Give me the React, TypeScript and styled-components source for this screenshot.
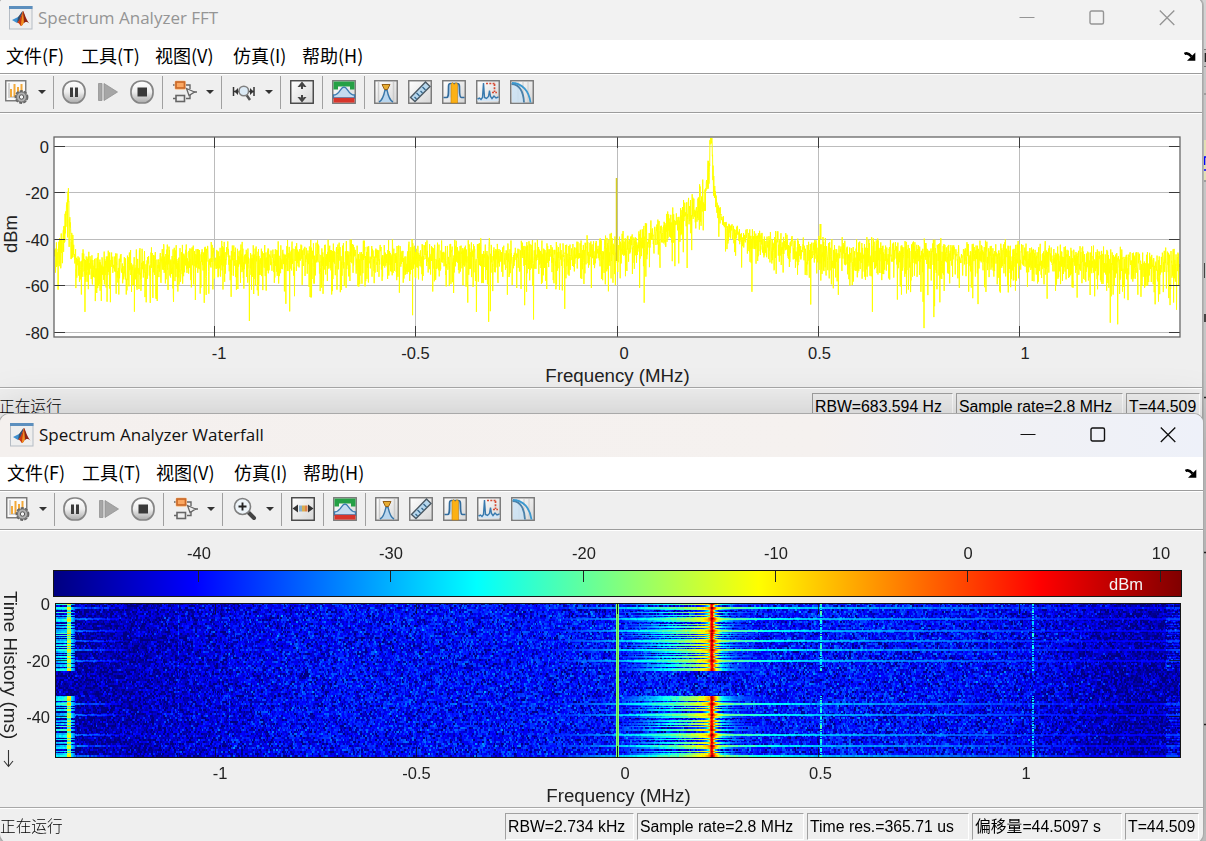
import React, { useLayoutEffect, useRef } from "react";
import styled, { createGlobalStyle } from "styled-components";

const GlobalStyle = createGlobalStyle`
  * { box-sizing: border-box; }
  html, body { margin: 0; padding: 0; }
  body { width: 1206px; height: 841px; overflow: hidden; }
`;

const SANS = `"Liberation Sans", "Noto Sans CJK SC", sans-serif`;
const UI = `"Open Sans", "Noto Sans CJK SC", sans-serif`;

/* ---------- window chrome ---------- */

const Desktop = styled.main`
  position: relative;
  width: 1206px;
  height: 841px;
  overflow: hidden;
  background: #c6c6c6;
`;

const Backdrop = styled.svg`
  position: absolute;
  right: 0;
  top: 0;
`;

const Window = styled.section<{ $x: number; $y: number; $h: number; $active?: boolean }>`
  position: absolute;
  left: ${(p) => p.$x}px;
  top: ${(p) => p.$y}px;
  width: 1203px;
  height: ${(p) => p.$h}px;
  display: flex;
  flex-direction: column;
  overflow: hidden;
  background: #efefef;
  border-radius: 9px;
  box-shadow: 0 0 0 1px #a9a9a9${(p) => (p.$active ? ", 0 0 44px 4px rgba(0,0,0,.17)" : ", 1px 0 0 1px #b4b4b4")};
`;

const TitleBar = styled.header<{ $active?: boolean }>`
  height: 43px;
  flex: none;
  display: flex;
  align-items: center;
  padding: 0 0 1px 10px;
  background: ${(p) =>
    p.$active ? "linear-gradient(90deg,#f4f0ee 0%,#f5f1ef 68%,#f1f1f4 80%,#eef1f9 100%)" : "#f2f2f2"};
  color: ${(p) => (p.$active ? "#111" : "#959595")};
`;

const Title = styled.h1`
  flex: 1;
  margin: 0 0 0 5px;
  font: 400 17px/24px ${UI};
  white-space: nowrap;
`;

const Controls = styled.div`
  display: flex;
  align-items: center;
  gap: 54px;
  padding-right: 27px;
  svg { display: block; }
`;

const MenuBar = styled.nav`
  height: 33px;
  flex: none;
  display: flex;
  align-items: center;
  background: #fff;
  padding: 0 6px 0 7px;
`;

const MenuItem = styled.span<{ $w: number }>`
  width: ${(p) => p.$w}px;
  padding-bottom: 3px;
  font: 400 18px/26px "Noto Sans CJK SC", sans-serif;
  color: #000;
  white-space: nowrap;
`;

const Spacer = styled.span`
  flex: 1;
`;

const ToolBar = styled.div`
  height: 41px;
  flex: none;
  display: flex;
  align-items: center;
  border-top: 1px solid #9c9c9c;
  border-bottom: 1px solid #fff;
  box-shadow: inset 0 1px #fff, inset 0 -1px #9c9c9c;
  padding: 0 0 4px 6px;
`;

const Tool = styled.span<{ $gap?: number }>`
  width: 24px;
  height: 24px;
  margin-left: ${(p) => p.$gap ?? 10}px;
  flex: none;
  svg { display: block; }
`;

const Divider = styled.i<{ $gap?: number }>`
  width: 1px;
  height: 33px;
  margin: 2px 0 0 ${(p) => p.$gap ?? 0}px;
  background: #a0a0a0;
`;

const Caret = styled.i`
  width: 24px;
  display: flex;
  justify-content: center;
  padding-left: 2px;
  &::after {
    content: "";
    border: 4px solid transparent;
    border-top: 4px solid #333;
    border-bottom: 0;
  }
`;

const Body = styled.div<{ $h: number }>`
  height: ${(p) => p.$h}px;
  flex: none;
  display: grid;
  & > * { grid-area: 1 / 1; display: block; }
`;

const StatusBar = styled.footer<{ $end: number }>`
  flex: 1;
  display: flex;
  align-items: flex-start;
  gap: 3px;
  border-top: 1px solid #a8a8a8;
  box-shadow: inset 0 1px #fff;
  padding: 5px ${(p) => p.$end}px 0 0;
`;

const StatusText = styled.span`
  flex: 1;
  font: 300 15.7px/26px "Noto Sans CJK SC", sans-serif;
  color: #000;
`;

const StatusCell = styled.span<{ $w: number }>`
  width: ${(p) => p.$w}px;
  height: 27px;
  border: 1px solid #fff;
  border-top-color: #a0a0a0;
  border-left-color: #a0a0a0;
  padding-left: 2px;
  font: 400 15.8px/26px ${SANS};
  color: #000;
  white-space: nowrap;
  overflow: hidden;
`;

const WaterfallCanvas = styled.canvas`
  margin: 72px 0 0 56px;
  width: 1125px;
  height: 154px;
`;

/* ---------- icons ---------- */

const Box = ({ children, dark }: { children: React.ReactNode; dark?: boolean }) => (
  <svg width="24" height="24" viewBox="0 0 24 24">
    <defs>
      <linearGradient id="face" x1="0" y1="0" x2="1" y2="1">
        <stop offset="0" stopColor="#fff" />
        <stop offset="1" stopColor="#d6d6d6" />
      </linearGradient>
    </defs>
    <rect x=".75" y=".75" width="22.5" height="22.5" fill="url(#face)" stroke={dark ? "#444" : "#777"} strokeWidth="1.4" />
    {children}
  </svg>
);

const MatlabIcon = () => (
  <svg width="24" height="24" viewBox="0 0 24 24">
    <rect x=".5" y=".5" width="22.5" height="22.5" fill="#eee" stroke="#b5bcc4" />
    <rect x="0" y="0" width="23.5" height="3" fill="#5c8fbe" />
    <path d="M3 14 L9 11 L11 13 L8 17Z" fill="#3d8fd0" />
    <path d="M9 11 C11 9 12 6 14 5 L11 14 L8 17Z" fill="#35506e" />
    <path d="M14 5 C12 10 11 14 8 17 C10 16 11 20 12 20 C14 20 14 16 17 15 C16 12 15 6 14 5Z" fill="#ca3a12" />
    <path d="M14 5 C13 12 12 16 12 20 C14 20 14 16 16 15Z" fill="#f09020" />
    <path d="M14 5 C16 8 17 14 21 18 C18 15 16 16 15 17Z" fill="#8d2414" />
  </svg>
);

const SettingsIcon = () => (
  <svg width="24" height="24" viewBox="0 0 24 24">
    <rect x=".75" y=".75" width="20" height="20" fill="#fafafa" stroke="#777" strokeWidth="1.4" />
    <path d="M4 3v15M5 17h10" stroke="#aaa" />
    <path d="M6 9v8M9.500 4v13M13 7v7M16.500 4v8" stroke="#f2a93a" strokeWidth="2" />
    <circle cx="16.500" cy="17" r="6" fill="#aaa" stroke="#666" strokeWidth="1.800" strokeDasharray="3 1.3" />
    <circle cx="16.500" cy="17" r="5" fill="#b0b0b0" stroke="#666" strokeWidth=".8" />
    <circle cx="16.500" cy="17" r="2.200" fill="#f4f4f4" stroke="#555" />
  </svg>
);

const RoundButton = ({ kind }: { kind: "pause" | "stop" }) => (
  <svg width="24" height="24" viewBox="0 0 24 24">
    <defs>
      <linearGradient id="round" x1="0" y1="0" x2="0" y2="1">
        <stop offset="0" stopColor="#fff" />
        <stop offset=".5" stopColor="#eee" />
        <stop offset="1" stopColor="#aaa" />
      </linearGradient>
    </defs>
    <rect x="1" y="1" width="22" height="22" rx="10" fill="url(#round)" stroke="#858585" strokeWidth="1.700" />
    {kind === "pause" ? (
      <path d="M8 7.500h3v9.500h-3zM13 7.500h3v9.500h-3z" fill="#3c3c3c" />
    ) : (
      <rect x="7.500" y="7.500" width="9.500" height="9" fill="#3a3a3a" />
    )}
  </svg>
);

const StepIcon = () => (
  <svg width="24" height="24" viewBox="0 0 24 24">
    <path d="M2.500 3.500h3.500v17h-3.500zM8 3.500l13.500 8.500L8 20.500z" fill="#a6a6a6" stroke="#939393" strokeWidth=".8" />
  </svg>
);

const BlocksIcon = () => (
  <svg width="24" height="24" viewBox="0 0 24 24" fill="none">
    <path d="M0 5h3M12 5h5v4M17 15v3.500h-4M0 18.500h3M21 12h3" stroke="#666" strokeWidth="1.400" />
    <rect x="1.500" y=".5" width="11.500" height="9.500" rx="2" fill="#f9cda3" />
    <rect x="3" y="2" width="8.500" height="6" fill="#fba862" stroke="#cb6a2a" strokeWidth="1.700" />
    <rect x="3" y="15.500" width="8.500" height="6" fill="#eee" stroke="#666" strokeWidth="1.600" />
    <path d="M13.500 8.500l8 3.500-5.500 3.500z" fill="#eee" stroke="#666" strokeWidth="1.300" />
  </svg>
);

const SpanZoomIcon = () => (
  <svg width="24" height="24" viewBox="0 0 24 24" fill="none">
    <path d="M1.500 7v9M22 7v9M2 11.500h5M17 11.500h5" stroke="#333" strokeWidth="1.500" />
    <path d="M2.500 11.500l3.500-3.500v7zM21.500 11.500l-3.500-3.500v7z" fill="#333" />
    <path d="M14.500 15l3.500 5" stroke="#555" strokeWidth="2.500" />
    <circle cx="11.800" cy="11" r="4.800" fill="#dceaf5" stroke="#808080" strokeWidth="1.600" />
  </svg>
);

const ZoomInIcon = () => (
  <svg width="24" height="24" viewBox="0 0 24 24" fill="none">
    <path d="M15 15l6 6" stroke="#444" strokeWidth="4" strokeLinecap="round" />
    <circle cx="9.500" cy="9.500" r="8" fill="#edf4f9" stroke="#808080" strokeWidth="1.600" />
    <path d="M9.500 5.500v8M5.500 9.500h8" stroke="#222" strokeWidth="1.900" />
  </svg>
);

const AutoscaleYIcon = () => (
  <Box dark>
    <path d="M12 3v6M12 15v6" stroke="#444" strokeWidth="2" />
    <path d="M12 1.500l-4.500 5.500h2.500l2-1.500 2 1.500h2.500zM12 22.500l-4.500-5.500h2.500l2 1.500 2-1.500h2.500z" fill="#444" />
  </Box>
);

const AutoscaleXIcon = () => (
  <Box dark>
    <rect x="8" y="8.500" width="3" height="6" fill="#8cb0cb" />
    <rect x="11" y="8.500" width="3" height="6" fill="#d8ad50" />
    <rect x="14" y="8.500" width="2.500" height="6" fill="#e0824c" />
    <path d="M1.500 11.500l5.500-4v8zM22.500 11.500l-5.500-4v8z" fill="#333" />
  </Box>
);

const MaskIcon = () => (
  <Box>
    <path d="M1.500 1.500h21V9.500h-4.500V6.500h-12v3h-4.500z" fill="#25a045" />
    <path d="M1.500 18V15C8 15 8 7 12 7S16 15 22.500 15v3z" fill="#c5dcf0" stroke="#3c7bb0" strokeWidth="1.300" />
    <rect x="1.500" y="17.800" width="21" height="4.800" fill="#d8352b" />
  </Box>
);

const PeakIcon = () => (
  <Box>
    <path d="M4.500 2v20M19.500 2v20" stroke="#ccc" strokeWidth="1.500" />
    <path d="M5 22c4-2 5-7 6-12h2c1 5 2 10 6 12" fill="#b9d6ee" stroke="#3976a8" strokeWidth="1.400" />
    <path d="M8 4.500h8l-2.500 5h-3z" fill="#e8ad32" stroke="#966015" />
  </Box>
);

const RulerIcon = () => (
  <Box>
    <path d="M2.500 17.500L17.500 2l4.500 4.500L7 21.500z" fill="#b8d8ee" stroke="#4b5964" strokeWidth="1.400" />
    <path d="M8.500 19l-2-2M11.500 16l-3-3M14.500 13l-2-2M17.500 10l-3-3" stroke="#35678d" strokeWidth="1.300" />
  </Box>
);

const ChannelIcon = () => (
  <Box>
    <path d="M1.500 17.500h3c2 0 2-3 2-8s0-6 2-6h7c2 0 2 2 2 6s0 8 2 8h3" fill="#c4dcf1" stroke="#326c9d" strokeWidth="1.700" />
    <path d="M9 23V4l1.500-1.500 1.700 2 1.800-2L15.500 4v19z" fill="#fbb116" stroke="#c87f0c" strokeWidth=".6" />
  </Box>
);

const DistortionIcon = () => (
  <Box>
    <path d="M1.500 19l2-1 1.500 1.500 1.500-2L7.500 3l1 14.500 2 1 2-2 1-6 1 6 1.500 2 2-2.500 2 2 2.500-1v4h-21z" fill="#d3e5f5" />
    <path d="M1.500 19l2-1 1.500 1.500 1.500-2L7.500 3l1 14.500 2 1 2-2 1-6 1 6 1.500 2 2-2.500 2 2 2.500-1" fill="none" stroke="#397aae" strokeWidth="1.400" />
    <path d="M10 3.500h10M18.500 4v8M16 12.500h5" stroke="#d64b33" strokeWidth="1.700" strokeDasharray="2 1.3" />
  </Box>
);

const CcdfIcon = () => (
  <Box>
    <path d="M8 2v20M13 2v20M18 2v20" stroke="#ccc" />
    <path d="M2 4c8 0 12 8 12.500 18.500H2z" fill="#c8e0f3" opacity=".8" />
    <path d="M1.500 4c8 0 12 8 12.500 18.500" fill="none" stroke="#4b80a8" strokeWidth="1.800" />
    <path d="M2 3c10 0 17 8 18.500 19.500" fill="none" stroke="#3b98cf" strokeWidth="1.800" />
  </Box>
);

const DockIcon = () => (
  <svg width="12" height="11" viewBox="0 0 12 11">
    <path d="M.5 3C3 1.500 5.500 3 7.500 5.500" fill="none" stroke="#000" strokeWidth="2.600" />
    <path d="M11.300 1.500v8.300H3z" fill="#000" />
  </svg>
);

/* ---------- shared pieces ---------- */

const WindowHead = ({ title, active }: { title: string; active?: boolean }) => (
  <TitleBar $active={active}>
    <MatlabIcon />
    <Title>{title}</Title>
    <Controls>
      <svg width="16" height="16" viewBox="0 0 16 16">
        <path d="M.5 7.500h15" stroke="currentColor" strokeWidth="1.100" />
      </svg>
      <svg width="16" height="16" viewBox="0 0 16 16">
        <rect x="1" y="1" width="13.500" height="13" rx="1.500" fill="none" stroke="currentColor" strokeWidth="1.400" />
      </svg>
      <svg width="16" height="16" viewBox="0 0 16 16">
        <path d="M.8 .5l14.500 14.500M15.300 .5L.8 15" stroke="currentColor" strokeWidth="1.300" />
      </svg>
    </Controls>
  </TitleBar>
);

const Menus = () => (
  <MenuBar>
    <MenuItem $w={75}>文件(F)</MenuItem>
    <MenuItem $w={74}>工具(T)</MenuItem>
    <MenuItem $w={78}>视图(V)</MenuItem>
    <MenuItem $w={69}>仿真(I)</MenuItem>
    <MenuItem $w={70}>帮助(H)</MenuItem>
    <Spacer />
    <DockIcon />
  </MenuBar>
);

const Tools = ({ zoom, scale }: { zoom: React.ReactNode; scale: React.ReactNode }) => (
  <ToolBar>
    <Tool $gap={0}><SettingsIcon /></Tool>
    <Caret />
    <Divider />
    <Tool $gap={8}><RoundButton kind="pause" /></Tool>
    <Tool><StepIcon /></Tool>
    <Tool><RoundButton kind="stop" /></Tool>
    <Divider $gap={8} />
    <Tool><BlocksIcon /></Tool>
    <Caret />
    <Divider />
    <Tool>{zoom}</Tool>
    <Caret />
    <Divider />
    <Tool $gap={9}>{scale}</Tool>
    <Divider $gap={8} />
    <Tool $gap={9}><MaskIcon /></Tool>
    <Divider $gap={8} />
    <Tool $gap={9}><PeakIcon /></Tool>
    <Tool><RulerIcon /></Tool>
    <Tool><ChannelIcon /></Tool>
    <Tool><DistortionIcon /></Tool>
    <Tool><CcdfIcon /></Tool>
  </ToolBar>
);

/* ---------- signal data ---------- */

const makeRandom = (seed: number) => () => {
  seed = (seed + 0x6d2b79f5) | 0;
  let t = Math.imul(seed ^ (seed >>> 15), 1 | seed);
  t = (t + Math.imul(t ^ (t >>> 7), 61 | t)) ^ t;
  return ((t ^ (t >>> 14)) >>> 0) / 4294967296;
};

const lerpTable = (table: number[][], x: number, col = 1) => {
  if (x <= table[0][0]) return table[0][col];
  for (let i = 1; i < table.length; i++) {
    if (x <= table[i][0]) {
      const a = table[i - 1];
      const b = table[i];
      return a[col] + ((b[col] - a[col]) * (x - a[0])) / (b[0] - a[0]);
    }
  }
  return table[table.length - 1][col];
};

// x, level in dBm, noise scale
const ENVELOPE = [
  [54, -45, 0.8], [62, -42, 0.8], [65, -35, 0.8], [67, -22, 1], [68, -19, 1], [69.5, -26, 1],
  [71.5, -39, 0.8], [75, -46, 0.8], [80, -50, 0.9], [130, -50.5, 1], [200, -47, 0.9], [400, -46.5, 0.9],
  [560, -45.5, 0.9], [620, -43, 0.85], [650, -38, 0.85], [680, -31, 0.9], [700, -23, 0.95], [706, -17, 1],
  [709.5, -5, 0.8], [710.5, 7, 0.7], [711.8, 7, 0.6], [713, -11, 0.5], [716, -23, 0.5], [722, -31, 0.5],
  [732, -36, 0.5], [745, -39, 0.6], [780, -42, 0.75], [830, -45.5, 0.9], [960, -45.5, 0.9], [1060, -47.5, 0.9],
  [1130, -50, 0.9], [1180, -49, 0.9],
];

const yOf = (db: number) => 33 - db * 2.325;

const buildTrace = () => {
  const rnd = makeRandom(311);
  const pts: string[] = [];
  for (let x = 54.5; x < 1179.5; x += 0.24) {
    const level = lerpTable(ENVELOPE, x);
    const k = lerpTable(ENVELOPE, x, 2);
    const p = -Math.log(1 - rnd());
    const db = Math.max(level + 10.5 * Math.log10(p) * k, level - 36 * k);
    pts.push(`${x.toFixed(2)},${Math.max(24, Math.min(222, yOf(Math.min(db, level + 7.5 * k)))).toFixed(1)}`);
  }
  return pts.join(" ");
};

const TRACE = buildTrace();

const jet = (t: number) => {
  const c = (v: number) => Math.round(255 * Math.max(0, Math.min(1, v)));
  return [c(1.5 - Math.abs(4 * t - 3)), c(1.5 - Math.abs(4 * t - 2)), c(1.5 - Math.abs(4 * t - 1))];
};

// x, mean floor of the colour index
const FLOOR = [
  [56, 0.035], [120, 0.045], [180, 0.08], [300, 0.125], [600, 0.135], [860, 0.14], [1000, 0.12], [1080, 0.08],
  [1130, 0.04], [1181, 0.04],
];
// x, colour index of the burst for a strong sweep, an ordinary one and a quiet one
const BURST = [
  [480, 0, 0, 0], [560, 0.16, 0, 0], [600, 0.25, 0.06, 0], [640, 0.37, 0.24, 0], [665, 0.45, 0.37, 0],
  [690, 0.55, 0.5, 0.08], [703, 0.65, 0.61, 0.2], [707, 0.7, 0.67, 0.34], [709, 0.77, 0.73, 0.5],
  [710, 0.86, 0.82, 0.82], [711, 0.97, 0.93, 0.9], [712, 0.98, 0.9, 0.88], [713, 0.88, 0.82, 0.7],
  [715, 0.76, 0.7, 0.3], [718, 0.62, 0.54, 0.14], [722, 0.53, 0.36, 0], [735, 0.46, 0.22, 0],
  [770, 0.38, 0.1, 0], [830, 0.3, 0, 0], [960, 0.23, 0, 0], [1100, 0.12, 0, 0],
];
const STRONG = [5, 16, 28, 38, 47, 58, 101, 112, 132, 143, 153];
const QUIET = [
  2, 3, 7, 8, 10, 11, 13, 19, 20, 22, 25, 31, 33, 35, 40, 43, 45, 50, 52, 55, 60, 64,
  98, 103, 105, 108, 109, 115, 116, 119, 122, 124, 125, 128, 129, 135, 137, 138, 141, 146, 147, 149,
];

const paintWaterfall = (canvas: HTMLCanvasElement) => {
  const ctx = canvas.getContext("2d");
  if (!ctx) return;
  const W = 1125;
  const H = 154;
  const img = ctx.createImageData(W, H);
  const rnd = makeRandom(4242);
  const put = (x: number, y: number, r: number, g: number, b: number) => {
    const i = (y * W + x) * 4;
    img.data[i] = r;
    img.data[i + 1] = g;
    img.data[i + 2] = b;
    img.data[i + 3] = 255;
  };
  let noise: number[] = [];
  let tint = 0;
  for (let y = 0; y < H; y++) {
    const inBurst = y <= 67 || y >= 93;
    const strong = STRONG.some((s) => y === s || y === s - 1);
    const quiet = !strong && QUIET.includes(y);
    if (y % 2 === 0 || !noise.length) {
      noise = [];
      for (let x = 0; x < W; ) {
        const n = 0.19 * Math.log10(Math.max(0.03, (-Math.log(1 - rnd()) - Math.log(1 - rnd())) / 2));
        const w = rnd() < 0.7 ? 2 : 1;
        for (let k = 0; k < w; k++) noise.push(n);
        x += w;
      }
      tint = (rnd() - 0.5) * 0.08;
    }
    for (let x = 0; x < W; x++) {
      const px = x + 56;
      const n = noise[x];
      let t = lerpTable(FLOOR, px) + 0.015 + n;
      if ((px === 178 || px === 229) && rnd() < 0.6) t += 0.08;
      if (inBurst) {
        let s = lerpTable(BURST, px, strong ? 1 : quiet ? 3 : 2);
        if (!strong) s += tint * 0.8;
        if (s > 0.06) t = Math.max(t, s + n * 0.25);
        const d = px - 68.5;
        if (d < 0) {
          const edge = (quiet ? 0.04 : 0.4) + d * 0.005 + tint * 2;
          t = Math.max(t, edge + n * 0.3);
        }
        if (Math.abs(d) < 2) t = quiet ? 0.42 : 0.61 + tint * 1.8;
        else if (d > 0 && d < 6) t = Math.max(t, (quiet ? 0.12 : 0.44) - d * 0.035);
        else if (d > 0 && d < 60 && strong) t = Math.max(t, 0.26 - d * 0.003 + n * 0.5);
        if ((px === 820 || px === 821) && ((y * 7) >> 2) % 4 !== 0) t = Math.max(t, 0.39 + tint * 2);
        if ((px === 1032 || px === 1033) && ((y * 5) >> 2) % 3 !== 0) t = Math.max(t, 0.34 + tint * 2);
        if (px > 1165 && !quiet) t += 0.07;
      }
      t = Math.max(0.0, Math.min(1, t));
      let [r, g, b] = jet(t);
      if (px === 616 || px === 618) [r, g, b] = [128, 255, 110];
      if (px === 617) [r, g, b] = y < 11 || y > 142 ? [20, 50, 15] : [100, 210, 85];
      put(x, y, r, g, b);
    }
  }
  ctx.putImageData(img, 0, 0);
};

/* ---------- plots ---------- */

const XTICKS: [string, number, number][] = [
  ["-1", 215.5, 220], ["-0.5", 416.5, 416.5], ["0", 618, 625], ["0.5", 819.5, 820.5], ["1", 1020.5, 1026],
];

const SpectrumPlot = () => (
  <Body $h={273}>
    <svg width="1203" height="273" viewBox="-1 0 1203 273" fontFamily={SANS} fill="#222">
      <rect x="54" y="23" width="1126.500" height="200.500" fill="#fff" />
      <g stroke="#bcbcbc" shapeRendering="crispEdges">
        {[-80, -60, -40, -20, 0].map((v) => (
          <path key={v} d={`M54 ${Math.floor(yOf(v)) - 0.5}H1180`} />
        ))}
        {XTICKS.map(([l, x]) => (
          <path key={l} d={`M${x - 1} 23V223`} />
        ))}
      </g>
      <polyline points={TRACE} fill="none" stroke="#ffff00" strokeWidth="1" strokeLinejoin="bevel" />
      <path d="M616.500 64V147" stroke="#d4cc20" strokeWidth="1.500" />
      <path d="M820.500 110V125" stroke="#ff0" strokeWidth="2" />
      <g stroke="#3a3a3a" shapeRendering="crispEdges">
        {[-80, -60, -40, -20, 0].map((v) => (
          <path key={v} d={`M54 ${Math.floor(yOf(v)) - 0.5}H65M1169 ${Math.floor(yOf(v)) - 0.5}H1180`} />
        ))}
        {XTICKS.map(([l, x]) => (
          <path key={l} d={`M${x - 1} 23V34M${x - 1} 212V223`} />
        ))}
      </g>
      <rect x="54" y="23" width="1126" height="200" fill="none" stroke="#666" strokeWidth="1.300" />
      <g fontSize="16.500" textAnchor="end">
        {["0", "-20", "-40", "-60", "-80"].map((l, i) => (
          <text key={l} x="49" y={38.500 + i * 46.500}>{l}</text>
        ))}
      </g>
      <g fontSize="16.500" textAnchor="middle">
        {XTICKS.map(([l, , x]) => (
          <text key={l} x={x - 1} y="245">{l}</text>
        ))}
      </g>
      <text x="617.500" y="268" fontSize="18.700" textAnchor="middle">Frequency (MHz)</text>
      <text transform="translate(17 120) rotate(-90)" fontSize="18.500" textAnchor="middle">dBm</text>
    </svg>
  </Body>
);

const COLOR_TICKS: [string, number][] = [
  ["-40", 198.5], ["-30", 390.5], ["-20", 583.5], ["-10", 775.5], ["0", 967.5], ["10", 1160.5],
];

const WaterfallPlot = () => {
  const ref = useRef<HTMLCanvasElement>(null);
  useLayoutEffect(() => {
    if (ref.current) paintWaterfall(ref.current);
  }, []);
  return (
    <Body $h={276}>
      <WaterfallCanvas ref={ref} width={1125} height={154} />
      <svg width="1203" height="276" viewBox="0 1 1203 276" fontFamily={SANS} fill="#222">
        <defs>
          <linearGradient id="jet">
            <stop offset="0" stopColor="#000080" />
            <stop offset=".125" stopColor="#0000ff" />
            <stop offset=".375" stopColor="#00ffff" />
            <stop offset=".625" stopColor="#ffff00" />
            <stop offset=".875" stopColor="#ff0000" />
            <stop offset="1" stopColor="#800000" />
          </linearGradient>
        </defs>
        <rect x="53.500" y="40.500" width="1128" height="26" fill="url(#jet)" stroke="#151515" />
        {COLOR_TICKS.map(([l, x]) => (
          <g key={l}>
            <text x={x + 0.5} y="29" fontSize="16.500" textAnchor="middle">{l}</text>
            <path d={`M${x} 41V52`} stroke="#222" />
          </g>
        ))}
        <text x="1126" y="60" fontSize="16.500" textAnchor="middle" fill="#f4f4f4">dBm</text>
        <rect x="55.500" y="73.500" width="1125" height="154" fill="none" stroke="#151515" />
        <path
          d="M215.500 74v10M416.500 74v10M818.500 74v10M1019.500 74v10M215.500 217v10M416.500 217v10M818.500 217v10M1019.500 217v10M56 130.500h11M1169 130.500h11M56 186.500h11M1169 186.500h11"
          stroke="#111"
          strokeOpacity=".75"
        />
        <g fontSize="16.500" textAnchor="end">
          <text x="50" y="80">0</text>
          <text x="50" y="137">-20</text>
          <text x="50" y="193">-40</text>
        </g>
        <g fontSize="16.500" textAnchor="middle">
          {XTICKS.map(([l, , x]) => (
            <text key={l} x={x} y="249">{l}</text>
          ))}
        </g>
        <text x="618.500" y="272" fontSize="18.700" textAnchor="middle">Frequency (MHz)</text>
        <text transform="translate(4 61) rotate(90)" fontSize="18.900">Time History (ms)</text>
        <path d="M8.500 220v16M4 231l4.500 5.500 4.500-5.500" fill="none" stroke="#333" strokeWidth="1.100" />
      </svg>
    </Body>
  );
};

export default function App() {
  return (
    <>
      <GlobalStyle />
      <Desktop>
        <Backdrop width="8" height="841" viewBox="0 0 8 841">
          <path d="M0 0h8v49H0z" fill="#d2d2d2" />
          <path d="M0 49h8v17H0z" fill="#bdbdbd" />
          <path d="M0 49.500h8M0 66.500h8M0 94h8M0 181h8" stroke="#777" />
          <path d="M0 140h8v40H0z" fill="#e3dfb3" />
          <path d="M5 157h3M6.500 157v8M4 170h4" stroke="#00f" strokeWidth="1.600" />
          <path d="M7.500 53v9M6 263v15M7 314v8M0 397.500h8M0 552.500h8M0 724.500h8" stroke="#222" strokeWidth="1.600" />
        </Backdrop>
        <Window $x={-1} $y={-3} $h={700}>
          <WindowHead title="Spectrum Analyzer FFT" />
          <Menus />
          <Tools zoom={<SpanZoomIcon />} scale={<AutoscaleYIcon />} />
          <SpectrumPlot />
          <StatusBar $end={2}>
            <StatusText>正在运行</StatusText>
            <StatusCell $w={141}>RBW=683.594 Hz</StatusCell>
            <StatusCell $w={167}>Sample rate=2.8 MHz</StatusCell>
            <StatusCell $w={74}>T=44.509</StatusCell>
          </StatusBar>
        </Window>
        <Window $x={0} $y={414} $h={429} $active>
          <WindowHead title="Spectrum Analyzer Waterfall" active />
          <Menus />
          <Tools zoom={<ZoomInIcon />} scale={<AutoscaleXIcon />} />
          <WaterfallPlot />
          <StatusBar $end={4}>
            <StatusText>正在运行</StatusText>
            <StatusCell $w={129}>RBW=2.734 kHz</StatusCell>
            <StatusCell $w={167}>Sample rate=2.8 MHz</StatusCell>
            <StatusCell $w={162}>Time res.=365.71 us</StatusCell>
            <StatusCell $w={150}>偏移量=44.5097 s</StatusCell>
            <StatusCell $w={74}>T=44.509</StatusCell>
          </StatusBar>
        </Window>
      </Desktop>
    </>
  );
}
